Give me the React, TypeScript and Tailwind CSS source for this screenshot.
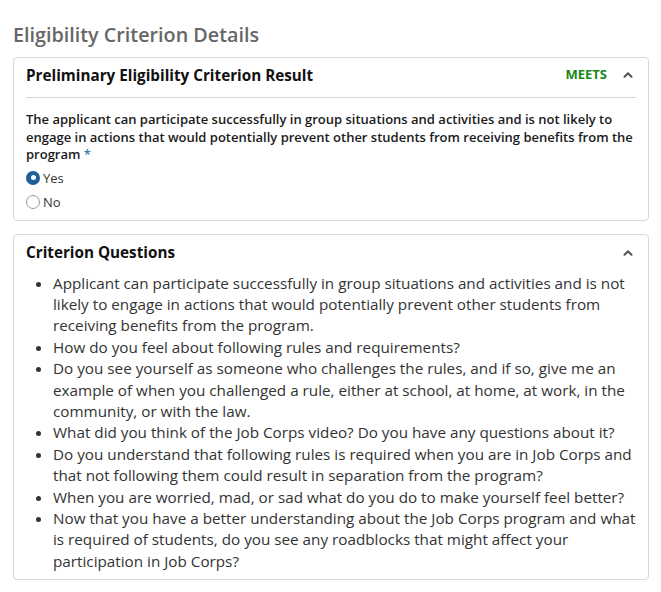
import { ChevronUp } from 'lucide-react';

const questions = [
	'Applicant can participate successfully in group situations and activities and is not likely to engage in actions that would potentially prevent other students from receiving benefits from the program.',
	'How do you feel about following rules and requirements?',
	'Do you see yourself as someone who challenges the rules, and if so, give me an example of when you challenged a rule, either at school, at home, at work, in the community, or with the law.',
	'What did you think of the Job Corps video? Do you have any questions about it?',
	'Do you understand that following rules is required when you are in Job Corps and that not following them could result in separation from the program?',
	'When you are worried, mad, or sad what do you do to make yourself feel better?',
	'Now that you have a better understanding about the Job Corps program and what is required of students, do you see any roadblocks that might affect your participation in Job Corps?',
];

function Radio({ label, checked }: { label: string; checked?: boolean }) {
	return (
		<label className="flex items-center gap-[3px] text-[13px] leading-[18px] text-[#333]">
			{checked ? (
				<span className="flex h-[14px] w-[14px] items-center justify-center rounded-full bg-[#1d5f9a]">
					<span className="h-[5px] w-[5px] rounded-full bg-white" />
				</span>
			) : (
				<span className="h-[14px] w-[14px] rounded-full border border-[#999] bg-white" />
			)}
			{label}
		</label>
	);
}

export default function App() {
	return (
		<div
			className="min-h-[592px] bg-white px-[13px] pt-[22px] text-[#222]"
			style={{ fontFamily: '"Open Sans", sans-serif' }}>
			<h1 className="text-[19.75px] font-semibold leading-[26px] text-[#666]">
				Eligibility Criterion Details
			</h1>

			<section className="mt-[9px] w-[636px] rounded-[4px] border border-[#d9d9d9] px-[12px] pb-[9px]">
				<div className="flex items-center justify-between border-b border-[#d4d4d4] pb-[11px] pt-[6px]">
					<h2 className="text-[15.25px] font-bold leading-[22px] text-[#111]">
						Preliminary Eligibility Criterion Result
					</h2>
					<div className="flex items-center gap-[14px] pr-[1px]">
						<span className="text-[13px] font-bold text-[#168a16]">MEETS</span>
						<ChevronUp className="h-[14px] w-[14px] text-[#555]" strokeWidth={3.5} />
					</div>
				</div>
				<p className="mt-[13px] text-[13px] font-semibold leading-[17.5px] text-[#1a1a1a]">
					The applicant can participate successfully in group situations and activities and is not likely to
					engage in actions that would potentially prevent other students from receiving benefits from the
					program <span className="text-[#2e7fa8]">*</span>
				</p>
				<div className="mt-[5px] flex flex-col gap-[6px]">
					<Radio label="Yes" checked />
					<Radio label="No" />
				</div>
			</section>

			<section className="mt-[13px] w-[636px] rounded-[4px] border border-[#d9d9d9] px-[12px] pb-[7px]">
				<div className="flex h-[36px] items-center justify-between">
					<h2 className="text-[15.25px] font-bold text-[#111]">Criterion Questions</h2>
					<ChevronUp className="mr-[1px] h-[14px] w-[14px] text-[#555]" strokeWidth={3.5} />
				</div>
				<ul className="mt-[2px] list-disc pl-[27px] text-[15.25px] leading-[21.4px] text-[#333]">
					{questions.map((q) => (
						<li key={q}>{q}</li>
					))}
				</ul>
			</section>
		</div>
	);
}
